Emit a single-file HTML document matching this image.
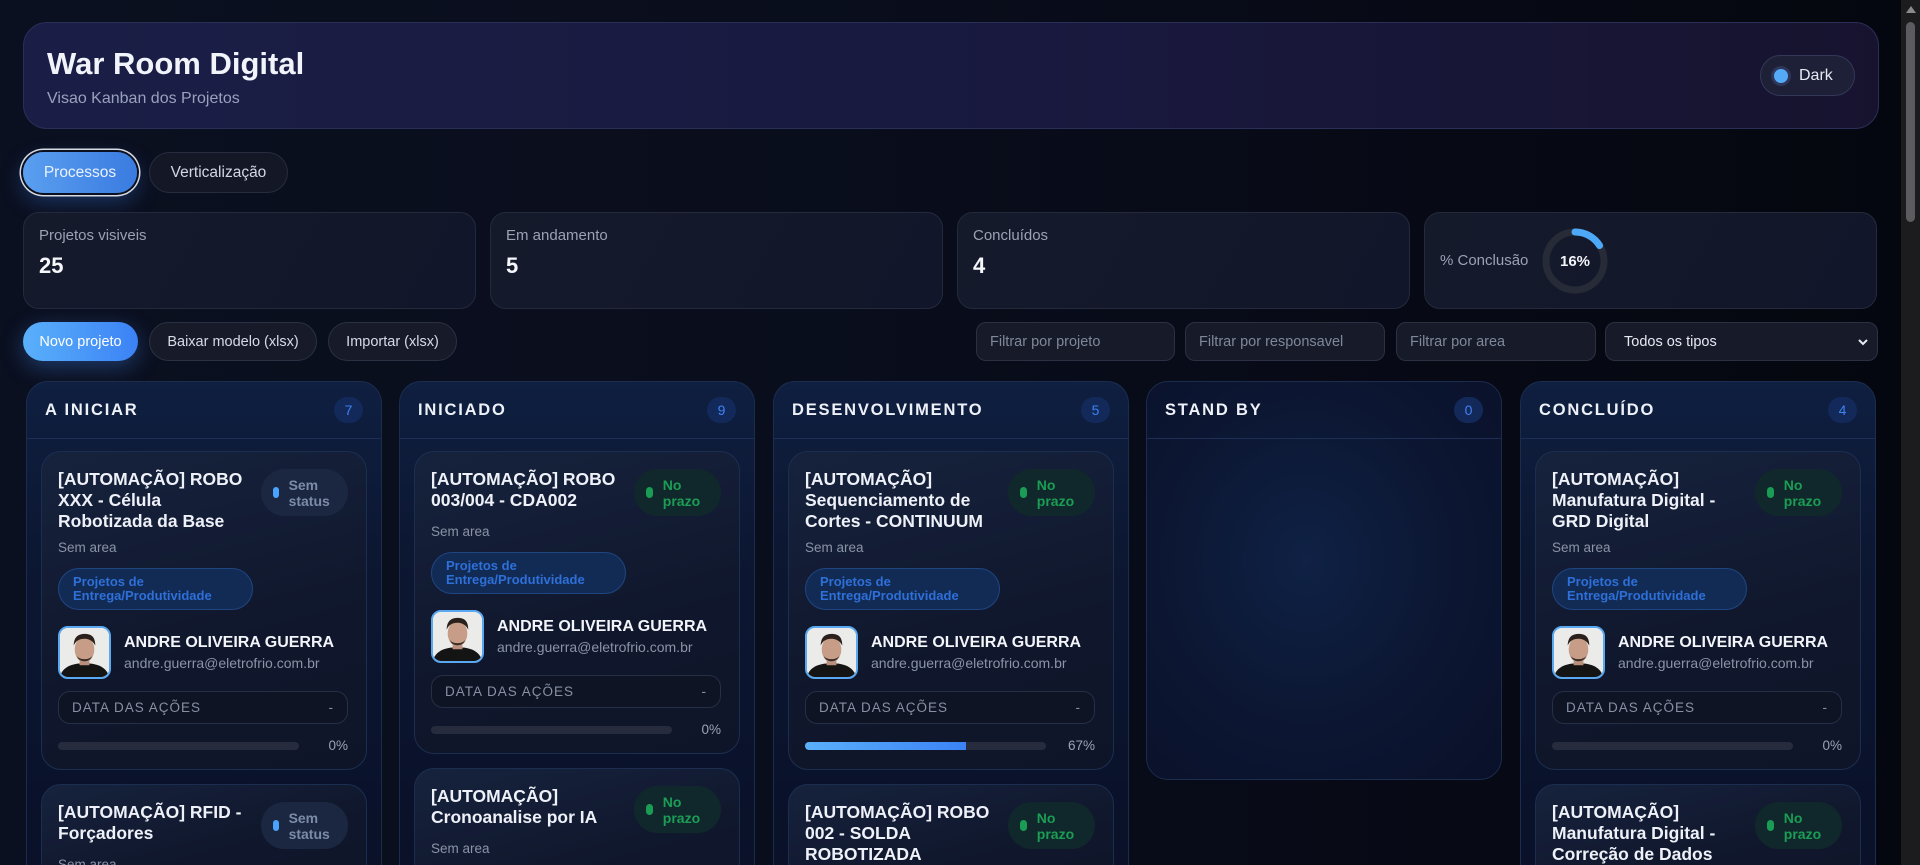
<!DOCTYPE html>
<html><head><meta charset="utf-8">
<style>
*{box-sizing:border-box;margin:0;padding:0}
html,body{width:1920px;height:865px;overflow:hidden}
body{font-family:"Liberation Sans",sans-serif;background:linear-gradient(90deg,#0b1020 0%,#090d1b 50%,#05070f 100%);color:#e8ecf5;position:relative}
.sb{position:absolute;right:0;top:0;width:19px;height:865px;background:#1c1c1f}
.sb .th{position:absolute;left:5px;top:22px;width:9px;height:200px;border-radius:5px;background:#5b5b60}
.sb .ar{position:absolute;left:5px;top:6px;width:0;height:0;border-left:5px solid transparent;border-right:5px solid transparent;border-bottom:7px solid #8a8a8e}
.hdr{position:absolute;left:23px;top:22px;width:1856px;height:107px;border-radius:24px;border:1px solid #2a2f58;background:linear-gradient(90deg,#1a1e46,#19193f 55%,#17132f)}
.hdr h1{position:absolute;left:23px;top:23px;font-size:31px;font-weight:700;letter-spacing:0;color:#f2f4fb}
.hdr p{position:absolute;left:23px;top:67px;font-size:16px;color:#9aa1bc}
.dark{position:absolute;right:23px;top:32px;width:95px;height:41px;border-radius:21px;background:#1d2036;border:1px solid #333857;display:flex;align-items:center;padding-left:10px;font-size:16px;color:#e6e9f3}
.dark i{width:20px;height:20px;border-radius:50%;background:#55aaf8;border:3px solid #2d3558;margin-right:8px;display:block}
.tab{position:absolute;top:152px;height:41px;border-radius:21px;font-size:15.5px;display:flex;align-items:center;justify-content:center}
.t1{left:23px;width:114px;background:linear-gradient(90deg,#5a9ff0,#3a7be0);box-shadow:0 0 0 2px #0b1020,0 0 0 3.5px #d8dbe3,0 8px 22px rgba(60,130,240,.35);color:#eaf2ff}
.t2{left:149px;width:139px;background:#141826;border:1px solid #262c3e;color:#d2d7e3}
.stat{position:absolute;top:212px;height:97px;width:453px;border-radius:16px;border:1px solid #242a3c;background:linear-gradient(120deg,#151a2b,#11162a);padding:14px 15px}
.stat .l{font-size:15px;color:#9aa2b4}
.stat .v{font-size:22px;font-weight:700;margin-top:9px;color:#f5f7fb}
.btn{position:absolute;top:322px;height:39px;border-radius:20px;font-size:14.5px;display:flex;align-items:center;justify-content:center;background:#171b29;border:1px solid #2b3143;color:#d6dbe6}
.bp{background:linear-gradient(90deg,#5ab0fa,#3b82f6);border:none;color:#fff;box-shadow:0 6px 22px rgba(70,140,250,.35)}
.f{position:absolute;top:322px;height:39px;border-radius:10px;background:#171b29;border:1px solid #2b3143;font-size:14.5px;color:#7f8799;padding-left:13px;display:flex;align-items:center}
.col{position:absolute;top:381px;width:356px;height:484px;border-radius:22px 22px 0 0;border:1px solid #1b2c4f;border-bottom:none;background:linear-gradient(180deg,#0f1f40 0%,#0c1732 35%,#0a1129 100%);overflow:hidden}
.ch{height:57px;border-bottom:1px solid #1d2f54;display:flex;align-items:center;justify-content:space-between;padding:0 18px 0 18px}
.ch b{font-size:16.5px;font-weight:700;letter-spacing:1.8px;color:#eef1f8}
.ch span{min-width:29px;height:26px;border-radius:13px;background:#12295a;color:#3f82f2;font-size:14px;display:flex;align-items:center;justify-content:center}
.cards{padding:12px 14px}
.card{border-radius:20px;border:1px solid #1c2e50;background:linear-gradient(165deg,#16223d,#10172c 60%,#0f1528);padding:17px 18px 16px 16px;margin-bottom:14px}
.top{display:flex;justify-content:space-between;gap:12px}
.ti{font-size:17.5px;font-weight:700;line-height:21px;color:#eef1f8;flex:1}
.bd{width:87px;height:47px;flex:none;border-radius:24px;background:#1b2741;display:flex;align-items:center;padding-left:12px;font-size:14px;line-height:16px;font-weight:700;color:#7c8ba8}
.bd i{width:7px;height:11px;border-radius:4px;background:#4aa3ff;margin-right:10px;display:block}
.ok{background:#10282b;color:#1c9d55}.ok i{background:#1a9c55}
.ar2{font-size:13.5px;color:#8b93a7;margin-top:8px}
.tag{display:inline-block;margin-top:13px;padding:6px 14px;width:195px;border-radius:21px;border:1px solid #1f4582;background:#122b55;color:#2e6fd8;font-size:13px;line-height:14px;font-weight:700}
.per{display:flex;gap:13px;margin-top:16px;align-items:center}
.av{width:53px;height:53px;border-radius:10px;border:2px solid #5aa8f0;overflow:hidden;flex:none;background:#eceeea}
.nm{font-size:16px;font-weight:700;color:#f3f5fa}
.em{font-size:14px;color:#8b93a7;margin-top:3px}
.dt{margin-top:12px;height:33px;border:1px solid #252f45;border-radius:12px;background:#0f1424;display:flex;align-items:center;justify-content:space-between;padding:0 13px;font-size:13.5px;letter-spacing:1px;color:#8790a4}
.pr{margin-top:14px;display:flex;align-items:center;justify-content:space-between}
.bar{width:241px;height:8px;border-radius:4px;background:#262c3d;overflow:hidden}
.bar div{height:100%;background:linear-gradient(90deg,#5ab0fa,#3b82f6)}
.pc{font-size:13.5px;color:#9aa2b4}
</style></head><body>
<div class="sb"><div class="ar"></div><div class="th"></div></div>
<div class="hdr"><h1>War Room Digital</h1><p>Visao Kanban dos Projetos</p><div class="dark"><i></i>Dark</div></div>
<div class="tab t1">Processos</div><div class="tab t2">Verticalização</div>
<div class="stat" style="left:23px"><div class="l">Projetos visiveis</div><div class="v">25</div></div>
<div class="stat" style="left:490px"><div class="l">Em andamento</div><div class="v">5</div></div>
<div class="stat" style="left:957px"><div class="l">Concluídos</div><div class="v">4</div></div>
<div class="stat" style="left:1424px;display:flex;align-items:center;padding-top:0;padding-bottom:0"><div class="l">% Conclusão</div>
<svg width="70" height="70" viewBox="0 0 70 70" style="margin-left:12px"><circle cx="35" cy="35" r="29" fill="none" stroke="#272b37" stroke-width="7"/><circle cx="35" cy="35" r="29" fill="none" stroke="#4da9f8" stroke-width="7" stroke-dasharray="29.2 153" stroke-linecap="round" transform="rotate(-90 35 35)"/><text x="35" y="40" text-anchor="middle" font-family="Liberation Sans" font-size="15" font-weight="700" fill="#f3f5fa">16%</text></svg></div>
<div class="btn bp" style="left:23px;width:115px">Novo projeto</div>
<div class="btn" style="left:149px;width:168px">Baixar modelo (xlsx)</div>
<div class="btn" style="left:328px;width:129px">Importar (xlsx)</div>
<div class="f" style="left:976px;width:199px">Filtrar por projeto</div>
<div class="f" style="left:1185px;width:200px">Filtrar por responsavel</div>
<div class="f" style="left:1396px;width:200px">Filtrar por area</div>
<div class="f" style="left:1605px;width:273px;color:#e6e9f2;padding-left:18px;justify-content:space-between;padding-right:8px">Todos os tipos<svg width="12" height="10"><path d="M2 3l4 4 4-4" stroke="#e6e9f2" stroke-width="2" fill="none"/></svg></div>

<svg width="0" height="0" style="position:absolute"><defs><symbol id="face" viewBox="0 0 50 50"><rect width="50" height="50" fill="#ebecea"/><path d="M0 50 C2 40 12 36 25 36 C38 36 48 40 50 50Z" fill="#141414"/><rect x="20" y="30" width="10" height="8" fill="#b98f7c"/><ellipse cx="25" cy="22" rx="10" ry="13" fill="#c79d88"/><path d="M14 18 C14 8 20 6 25 6 C31 6 36 8 36 18 C33 12 28 11 25 11 C20 11 16 13 14 18Z" fill="#2a211d"/><path d="M17 28 C19 36 31 36 33 28 C31 33 19 33 17 28Z" fill="#3a2c27"/></symbol></defs></svg>

<div class="col" style="left:26px"><div class="ch"><b>A INICIAR</b><span>7</span></div><div class="cards">
<div class="card"><div class="top"><div class="ti">[AUTOMAÇÃO] ROBO XXX - Célula Robotizada da Base</div><div class="bd"><i></i>Sem status</div></div>
<div class="ar2">Sem area</div><div class="tag">Projetos de Entrega/Produtividade</div>
<div class="per"><div class="av"><svg width="49" height="49"><use href="#face"/></svg></div><div><div class="nm">ANDRE OLIVEIRA GUERRA</div><div class="em">andre.guerra@eletrofrio.com.br</div></div></div>
<div class="dt"><span>DATA DAS AÇÕES</span><span>-</span></div><div class="pr"><div class="bar"></div><span class="pc">0%</span></div></div>
<div class="card"><div class="top"><div class="ti">[AUTOMAÇÃO] RFID - Forçadores</div><div class="bd"><i></i>Sem status</div></div><div class="ar2">Sem area</div></div>
</div></div>

<div class="col" style="left:399px"><div class="ch"><b>INICIADO</b><span>9</span></div><div class="cards">
<div class="card"><div class="top"><div class="ti">[AUTOMAÇÃO] ROBO 003/004 - CDA002</div><div class="bd ok"><i></i>No prazo</div></div>
<div class="ar2">Sem area</div><div class="tag">Projetos de Entrega/Produtividade</div>
<div class="per"><div class="av"><svg width="49" height="49"><use href="#face"/></svg></div><div><div class="nm">ANDRE OLIVEIRA GUERRA</div><div class="em">andre.guerra@eletrofrio.com.br</div></div></div>
<div class="dt"><span>DATA DAS AÇÕES</span><span>-</span></div><div class="pr"><div class="bar"></div><span class="pc">0%</span></div></div>
<div class="card"><div class="top"><div class="ti">[AUTOMAÇÃO] Cronoanalise por IA</div><div class="bd ok"><i></i>No prazo</div></div><div class="ar2">Sem area</div><div class="tag">Projetos de Entrega/Produtividade</div></div>
</div></div>

<div class="col" style="left:773px"><div class="ch"><b>DESENVOLVIMENTO</b><span>5</span></div><div class="cards">
<div class="card"><div class="top"><div class="ti">[AUTOMAÇÃO] Sequenciamento de Cortes - CONTINUUM</div><div class="bd ok"><i></i>No prazo</div></div>
<div class="ar2">Sem area</div><div class="tag">Projetos de Entrega/Produtividade</div>
<div class="per"><div class="av"><svg width="49" height="49"><use href="#face"/></svg></div><div><div class="nm">ANDRE OLIVEIRA GUERRA</div><div class="em">andre.guerra@eletrofrio.com.br</div></div></div>
<div class="dt"><span>DATA DAS AÇÕES</span><span>-</span></div><div class="pr"><div class="bar"><div style="width:67%"></div></div><span class="pc">67%</span></div></div>
<div class="card"><div class="top"><div class="ti">[AUTOMAÇÃO] ROBO 002 - SOLDA ROBOTIZADA</div><div class="bd ok"><i></i>No prazo</div></div><div class="ar2">Sem area</div></div>
</div></div>

<div class="col" style="left:1146px;height:399px;border-radius:22px;border-bottom:1px solid #1b2c4f;background:radial-gradient(ellipse at 45% 45%,#0f2145 0%,#0c1733 50%,#0a1029 100%)"><div class="ch"><b>STAND BY</b><span>0</span></div></div>

<div class="col" style="left:1520px"><div class="ch"><b>CONCLUÍDO</b><span>4</span></div><div class="cards">
<div class="card"><div class="top"><div class="ti">[AUTOMAÇÃO] Manufatura Digital - GRD Digital</div><div class="bd ok"><i></i>No prazo</div></div>
<div class="ar2">Sem area</div><div class="tag">Projetos de Entrega/Produtividade</div>
<div class="per"><div class="av"><svg width="49" height="49"><use href="#face"/></svg></div><div><div class="nm">ANDRE OLIVEIRA GUERRA</div><div class="em">andre.guerra@eletrofrio.com.br</div></div></div>
<div class="dt"><span>DATA DAS AÇÕES</span><span>-</span></div><div class="pr"><div class="bar"></div><span class="pc">0%</span></div></div>
<div class="card"><div class="top"><div class="ti">[AUTOMAÇÃO] Manufatura Digital - Correção de Dados</div><div class="bd ok"><i></i>No prazo</div></div><div class="ar2">Sem area</div></div>
</div></div>
</body></html>
